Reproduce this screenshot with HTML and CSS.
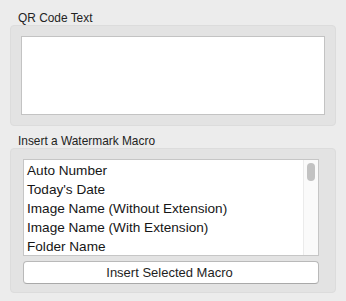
FILE: index.html
```html
<!DOCTYPE html>
<html>
<head>
<meta charset="utf-8">
<link rel="stylesheet" href="styles.css">
</head>
<body>
<div class="page">
  <div class="label">QR Code Text</div>
  <div class="group group-qr">
    <div class="textarea"></div>
  </div>
  <div class="label label-second">Insert a Watermark Macro</div>
  <div class="group group-macro">
    <div class="listbox">
      <div class="items">
        <div class="item">Auto Number</div>
        <div class="item">Today's Date</div>
        <div class="item">Image Name (Without Extension)</div>
        <div class="item">Image Name (With Extension)</div>
        <div class="item">Folder Name</div>
      </div>
      <div class="scrollbar"><div class="thumb"></div></div>
    </div>
    <div class="button">Insert Selected Macro</div>
  </div>
</div>
</body>
</html>
```
FILE: styles.css
```css
html, body {
  margin: 0;
  padding: 0;
  background: #ececec;
  width: 346px;
  height: 301px;
  overflow: hidden;
}
body {
  font-family: "Liberation Sans", Arial, sans-serif;
  color: #1e1e1e;
}
.page {
  padding: 11px 0 0 10px;
  width: 326px;
}
.label {
  font-size: 11.9px;
  line-height: 14px;
  height: 14px;
  padding-left: 8px;
  color: #232323;
}
.label-second {
  margin-top: 8px;
}
.group {
  background: #e3e3e3;
  border: 1px solid #dcdcdc;
  border-radius: 4px;
}
.group-qr {
  padding: 10px;
}
.textarea {
  height: 77px;
  background: #ffffff;
  border: 1px solid #c3c3c3;
}
.group-macro {
  padding: 10px 16px 8px 12px;
}
.listbox {
  height: 95px;
  background: #ffffff;
  border: 1px solid #c6c6c6;
  display: flex;
}
.items {
  flex: 1;
  overflow: hidden;
  padding-left: 3px;
}
.item {
  height: 19px;
  line-height: 21px;
  font-size: 13.6px;
  white-space: nowrap;
  color: #161616;
}
.scrollbar {
  width: 11px;
  padding: 3px 0 0 3px;
  background: #fafafa;
  border-left: 1px solid #ebebeb;
}
.thumb {
  width: 8px;
  height: 18px;
  border-radius: 4px;
  background: #c2c2c2;
}
.button {
  margin-top: 5px;
  height: 21px;
  line-height: 21px;
  background: #ffffff;
  border: 1px solid #b9b9b9;
  border-bottom-color: #a9a9a9;
  border-radius: 4px;
  text-align: center;
  font-size: 13px;
  color: #1e1e1e;
  padding-right: 3px;
}
```
